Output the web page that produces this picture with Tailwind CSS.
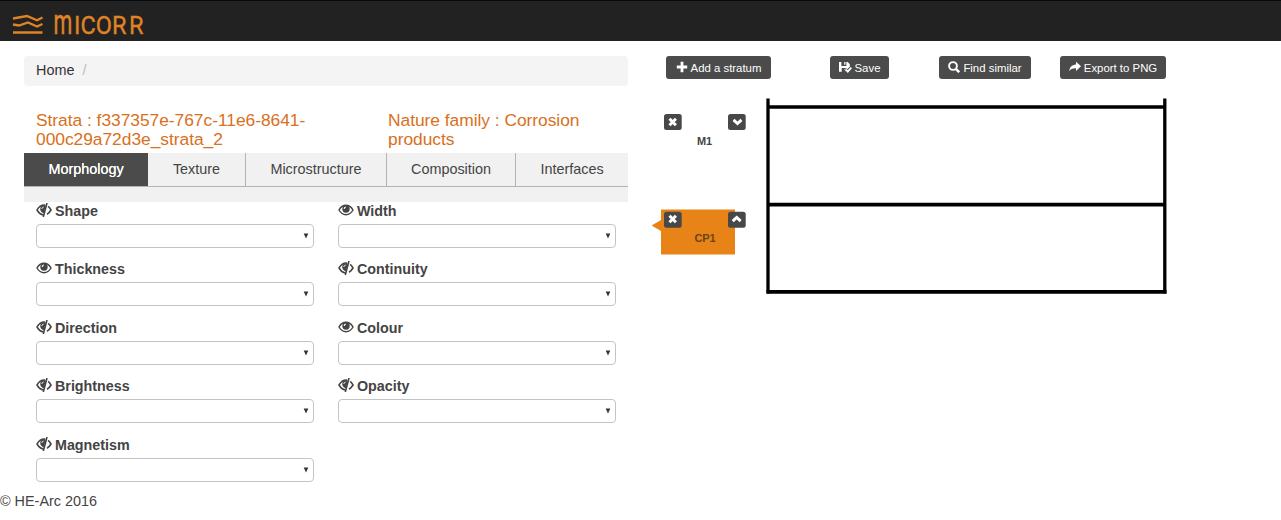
<!DOCTYPE html>
<html lang="en">
<head>
<meta charset="utf-8">
<title>MiCorr</title>
<script src="https://cdn.jsdelivr.net/npm/@tailwindcss/browser@4"></script>
</head>
<body class="bg-white text-[#444] text-[14.4px] leading-5 font-['Liberation_Sans',Arial,sans-serif] h-[520px] overflow-hidden flex flex-col">
<svg class="hidden">
  <symbol id="eye" viewBox="0 0 16 12"><path d="M1 6C2.600 3.200 5 1.300 8 1.300S13.400 3.200 15 6c-1.600 2.800-4 4.700-7 4.700S2.600 8.800 1 6z" fill="none" stroke="currentColor" stroke-width="1.500"/><circle cx="8" cy="5" r="3.700" fill="currentColor"/><path d="M6.200 4.900c0-1.100.7-1.800 1.700-1.900" fill="none" stroke="#fff" stroke-width="1.100"/></symbol>
  <symbol id="eyeoff" viewBox="0 0 16 14"><path d="M9 2.100C5.500 1.700 2.800 4 1 7c1.500 2.500 3.600 4.500 6.400 4.900" fill="none" stroke="currentColor" stroke-width="1.500"/><path d="M9.800 2.300C6.500 1.600 4.200 3.200 4.200 6c0 2.100 1.500 4 3.800 4z" fill="currentColor"/><path d="M5.900 6c0-1.100.7-1.800 1.700-1.900" fill="none" stroke="#fff" stroke-width="1"/><path d="M11 0 7.300 14M12.100 3.400C13.300 4.300 14.200 5.600 15 7c-1.100 1.900-2.400 3.500-4 4.200" fill="none" stroke="currentColor" stroke-width="1.600"/></symbol>
  <symbol id="x" viewBox="0 0 10 10"><path d="M1.800 1.800 8.200 8.200M8.200 1.800 1.800 8.200" stroke="#fff" stroke-width="3"/></symbol>
  <symbol id="down" viewBox="0 0 10 10"><path d="M1 2.800 5 6.500 9 2.800" fill="none" stroke="#fff" stroke-width="3"/></symbol>
  <symbol id="up" viewBox="0 0 10 10"><path d="M1 7.200 5 3.500 9 7.200" fill="none" stroke="#fff" stroke-width="3"/></symbol>
  <symbol id="arrow" viewBox="0 0 8 8"><path d="M1.700 1.500h4.600L4 6.500z" fill="#333"/></symbol>
</svg>

<header class="h-[41px] shrink-0 bg-[#222] border-t border-[#080808] pl-3">
  <svg class="block" width="140" height="40" viewBox="12 1 140 40">
    <g fill="none" stroke="#e08326" stroke-width="2.300"><path d="M13 18.500 27 16l10 4.300 5.500-2.800M13 24.500l6 1 9-3 9 4 5.500-2.500M13 32.500h29.500"/></g>
    <g fill="#e08326" stroke="#e08326" stroke-width=".35" font-family="Roboto">
      <text transform="translate(53.500 33.500) scale(.62 1)" font-size="34.500" font-weight="400" stroke-width=".5">m</text>
      <text transform="translate(0 33.500) scale(.88 1)" x="84 91.500 108.700 127.300 146.600" font-size="26.700">ICORR</text>
    </g>
  </svg>
</header>

<div class="flex h-[450px] shrink-0">
  <main class="w-[604px] ml-6 pt-[15px] shrink-0">
    <nav class="h-[30px] rounded bg-[#f4f4f4] pl-3 pb-[3px] flex items-center gap-2"><a class="text-[#333]">Home</a><span class="text-[#bbb]">/</span></nav>
    <div class="flex h-[67px] pt-[25px] pl-3 text-[#d8701c] text-[17.400px] leading-[19px] tracking-[-0.002em] whitespace-nowrap">
      <h4 class="w-[352px]">Strata : f337357e-767c-11e6-8641-<br>000c29a72d3e_strata_2</h4>
      <h4>Nature family : Corrosion<br>products</h4>
    </div>
    <div class="bg-[#f1f1f1] h-[49px]">
      <div class="flex h-[34px] border-b border-[#b4b4b4] text-[#444] leading-[33px] text-center">
        <div class="w-[124px] bg-[#4b4b4b] text-white [text-shadow:0_0_0.500px_#fff]">Morphology</div>
        <div class="w-[98px] border-r border-[#b4b4b4]">Texture</div>
        <div class="w-[141px] border-r border-[#b4b4b4]">Microstructure</div>
        <div class="w-[129px] border-r border-[#b4b4b4]">Composition</div>
        <div class="w-[112px]">Interfaces</div>
      </div>
    </div>
    <form id="fields" class="grid grid-cols-2 gap-x-6 px-3 auto-rows-[58.400px]"></form>
  </main>

  <aside class="ml-[24px] pt-[15px] w-[520px] shrink-0">
    <div class="flex h-[23px] pl-[14px] text-white text-[11.400px] leading-[24px] whitespace-nowrap">
      <button class="w-[105px] mr-[59px] bg-[#4b4b4b] rounded-[3px] flex items-center justify-center gap-[3px]"><svg class="mb-px" width="12" height="12" viewBox="0 0 12 12"><path d="M6 .8v10.400M.8 6h10.400" stroke="#fff" stroke-width="2.800"/></svg><span class="pt-px">Add a stratum</span></button>
      <button class="w-[59px] mr-[50px] bg-[#4b4b4b] rounded-[3px] flex items-center justify-center gap-[3px]"><svg class="mb-px" width="13" height="13" viewBox="0 0 12 12"><path fill="#fff" d="M0 1h2.200v3.500h4.600V1H8l2 2v2.200L7.500 7.600 6.300 6.400 4.900 7.800 6.500 9.400H6V6.500H2.500V10H0zM4.800 1H6v2.500H4.800z"/><path d="m6.300 8 1.800 1.900 3.300-3.700" fill="none" stroke="#fff" stroke-width="1.700"/></svg><span class="pt-px">Save</span></button>
      <button class="w-[92px] mr-[29px] bg-[#4b4b4b] rounded-[3px] flex items-center justify-center gap-[3px]"><svg class="mb-px" width="12" height="12" viewBox="0 0 12 12"><circle cx="5" cy="5" r="3.900" fill="none" stroke="#fff" stroke-width="1.900"/><path d="m7.800 7.800 3.400 3.400" stroke="#fff" stroke-width="2.500"/></svg><span class="pt-px">Find similar</span></button>
      <button class="w-[106px] bg-[#4b4b4b] rounded-[3px] flex items-center justify-center gap-[3px]"><svg class="mb-px" width="12" height="12" viewBox="0 0 12 12"><path fill="#fff" d="M7 .8v2.600C2.500 3.700.6 6.300.1 10.200 1.800 7.900 3.700 7.200 7 7.300v2.600L12 5.300z"/></svg><span class="pt-px">Export to PNG</span></button>
    </div>
    <svg class="block mt-[18px]" width="520" height="202" viewBox="652 97 520 202" font-weight="700" font-size="11">
      <path fill="#e88317" d="M661 209.500h74v45h-74V231l-9.300-5.500 9.300-5.500z"/>
      <g fill="none" stroke="#000"><path d="M768 98.500v195M1164.800 98.500v195" stroke-width="3.300"/><path d="M768 107h397M768 204.700h397M766.500 291.800h400" stroke-width="3.700"/></g>
      <g fill="#484848"><rect x="664" y="114" width="17.700" height="16" rx="2.500"/><rect x="728" y="114" width="17.700" height="16" rx="2.500"/><rect x="664" y="211.700" width="17.700" height="16" rx="2.500"/><rect x="728" y="211.700" width="17.700" height="16" rx="2.500"/></g>
      <use href="#x" x="667.700" y="117" width="10" height="10"/><use href="#down" x="732.500" y="117" width="10" height="10"/>
      <use href="#x" x="667.700" y="214" width="10" height="10"/><use href="#up" x="731.700" y="214" width="10" height="10"/>
      <text x="697" y="145" fill="#444" textLength="15">M1</text>
      <text x="694.500" y="242" fill="#6b4518" textLength="21">CP1</text>
    </svg>
  </aside>
</div>
<footer class="text-[14.400px]">© HE-Arc 2016</footer>

<script>
  const fields = [['Shape',0],['Width',1],['Thickness',1],['Continuity',0],['Direction',0],['Colour',1],['Brightness',0],['Opacity',0],['Magnetism',0]];
  document.getElementById('fields').innerHTML = fields.map(([name, shown]) => `
    <div>
      <label class="flex h-[22px] items-center gap-[3px] pb-[4px] text-[14.300px] font-bold"><svg class="w-[16px] h-[14px] mb-[2px]"><use href="#${shown ? 'eye' : 'eyeoff'}"/></svg>${name}</label>
      <div class="h-[24px] border border-[#c4c4c4] rounded-[4px] flex items-center justify-end pr-[3px]"><svg width="8" height="8"><use href="#arrow"/></svg></div>
    </div>`).join('');
</script>
</body>
</html>
